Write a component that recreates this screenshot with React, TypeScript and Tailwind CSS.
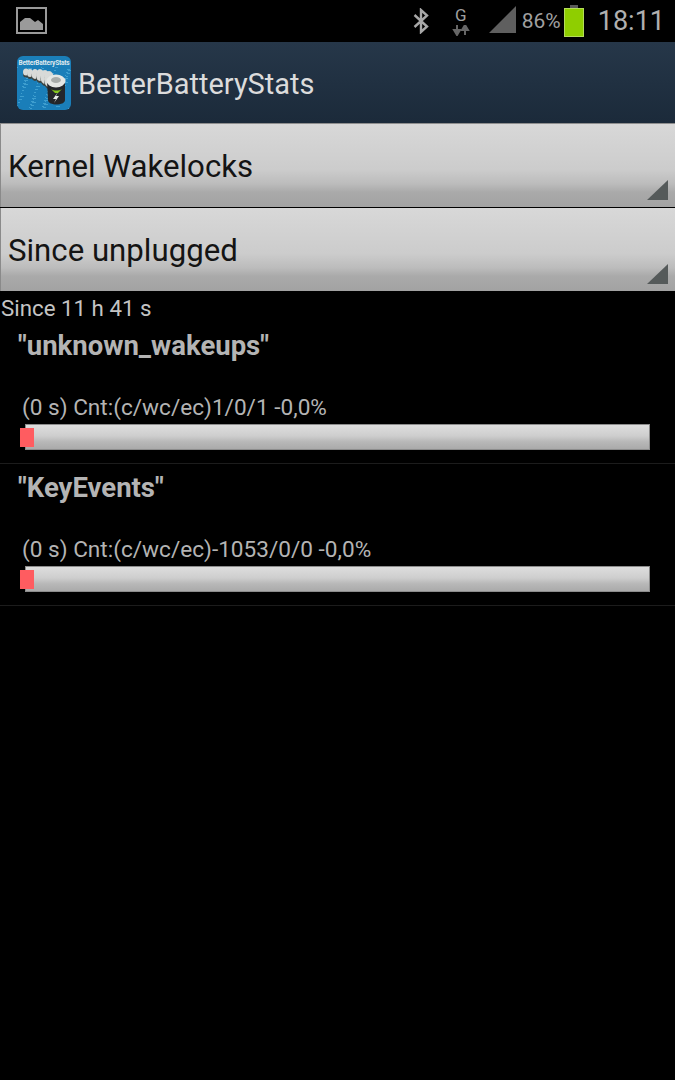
const font = { fontFamily: "Roboto, sans-serif" }

// speckle for the icon background
const specks = Array.from({ length: 90 }, (_, i) => ({
  x: (i * 17) % 52,
  y: 11 + ((i * 29) % 42),
  w: 1 + (i % 4),
}))

const chain = [
  { cx: 9, cy: 16, rx: 3, ry: 3.5 },
  { cx: 13, cy: 17, rx: 3, ry: 4 },
  { cx: 18, cy: 18, rx: 3.5, ry: 5 },
  { cx: 23, cy: 19, rx: 4, ry: 6 },
  { cx: 28, cy: 21, rx: 4.5, ry: 7 },
  { cx: 32, cy: 23, rx: 5, ry: 8 },
]

function AppIcon() {
  return (
    <div className="relative h-[54px] w-[54px] shrink-0 overflow-hidden rounded-[6px] bg-[#1b7fb9]">
      <div className="absolute left-0 right-0 top-[3px] text-center text-[6.5px] font-bold leading-[8px] tracking-[-0.2px] text-[#dfe8ee] whitespace-nowrap">
        BetterBatteryStats
      </div>
      <svg viewBox="0 0 54 54" className="absolute inset-0 h-full w-full">
        <g fill="#62bde6" opacity="0.5">
          {specks.map((s, i) => (
            <rect key={i} x={s.x} y={s.y} width={s.w} height="1" />
          ))}
        </g>
        {chain.map((c, i) => (
          <g key={i}>
            <ellipse cx={c.cx} cy={c.cy + 2} rx={c.rx} ry={c.ry} fill="#3c4442" />
            <ellipse cx={c.cx} cy={c.cy} rx={c.rx} ry={c.ry} fill="#d8dad8" />
          </g>
        ))}
        <path d="M30 25 H48 V44 C48 50 31 50 31 44 Z" fill="#24262a" />
        <ellipse cx="39" cy="25" rx="9.5" ry="6.5" fill="#e4e6e4" />
        <ellipse cx="39" cy="24" rx="5" ry="3" fill="#a8acaa" />
        <path d="M34 33 C37 35 42 35 45 33 L41 37 L38 37 Z" fill="#86c81c" />
        <path d="M41 36 L36 43 L39 43 L37 47 L42 40 L39 40 Z" fill="#e8ece8" />
      </svg>
    </div>
  )
}

function StatusBar() {
  return (
    <div className="flex h-[42px] items-center justify-between bg-black pl-4 pr-[10px]">
      <svg width="31" height="27" viewBox="0 0 31 27" className="mt-[-2px]">
        <rect x="1" y="1" width="29" height="25" fill="none" stroke="#9a9a9a" strokeWidth="2" />
        <path d="M4 23 L4 15 L9 11 L14 11 L19 15 L22 13 L27 17 L27 23 Z" fill="#9a9a9a" />
      </svg>
      <div className="flex items-center">
        <svg width="16" height="26" viewBox="0 0 16 26" className="mr-[22px]">
          <path d="M1.5 7 L14 18.5 L8 24 L8 2 L14 7.5 L1.5 19" fill="none" stroke="#a8a8a8" strokeWidth="2.4" />
        </svg>
        <div className="mr-[18px] flex w-[20px] flex-col items-center">
          <span className="text-[17px] leading-[16px] text-[#a0a0a0]">G</span>
          <svg width="18" height="11" viewBox="0 0 18 11" className="mt-[2px]">
            <path d="M5 0 V6 M2 5 L5 10 L8 5 Z" stroke="#666" strokeWidth="2" fill="#666" />
            <path d="M13 10 V4 M10 5 L13 0 L16 5 Z" stroke="#666" strokeWidth="2" fill="#666" />
          </svg>
        </div>
        <svg width="28" height="28" viewBox="0 0 28 28" className="mt-[-2px]">
          <path d="M0 27 L27 0 V27 Z" fill="#5f5f5f" />
        </svg>
        <span className="ml-[5px] text-[21px] leading-none text-[#a0a0a0]">86%</span>
        <div className="ml-[3px] flex flex-col items-center">
          <div className="h-[3px] w-[8px] bg-[#5a5a5a]" />
          <div className="h-[29px] w-[20px] border border-[#b4dc5a] bg-[#8fce00]" />
        </div>
        <span className="ml-[14px] text-[27px] leading-none text-[#b0b0b0]">18:11</span>
      </div>
    </div>
  )
}

function Spinner({ label }: { label: string }) {
  return (
    <div className="relative flex h-[83px] items-center border-l border-[#8a8a8a] bg-[linear-gradient(to_bottom,#d8d8d8_0%,#cccccc_55%,#bcbcbc_72%,#aaaaaa_82%,#a2a2a2_100%)] pl-[7px] pt-[2px]">
      <span className="text-[31.2px] leading-none text-[#141414]">{label}</span>
      <svg width="21" height="20" viewBox="0 0 21 20" className="absolute bottom-[7px] right-[7px]">
        <path d="M0 20 L21 0 V20 Z" fill="#555a5a" />
      </svg>
    </div>
  )
}

function StatRow({ name, detail }: { name: string; detail: string }) {
  return (
    <div className="h-[142px] border-b border-[#1c1c1c] pl-[18px] pt-[9px]">
      <div className="text-[27.5px] font-bold leading-[30px] text-[#b4b4b4]">{name}</div>
      <div className="mt-[35px] pl-[4px] text-[22.6px] leading-[24px] text-[#b4b4b4]">{detail}</div>
      <div className="relative ml-[7px] mt-[4px] h-[26px] w-[625px] border border-[#8c8c8c] bg-[linear-gradient(to_bottom,#dedede_0%,#cecece_45%,#b8b8b8_70%,#aaaaaa_100%)]">
        <div className="absolute left-[-6px] top-[3px] h-[19px] w-[14px] bg-[#ff5c60]" />
      </div>
    </div>
  )
}

export default function App() {
  return (
    <div className="h-[1080px] w-[675px] overflow-hidden bg-black" style={font}>
      <StatusBar />
      <div className="flex h-[81px] items-center gap-[7px] bg-[linear-gradient(to_bottom,#263749,#1b2a3a)] pl-[17px]">
        <AppIcon />
        <span className="pt-[3px] text-[29px] leading-none text-[#dcdcdc]">BetterBatteryStats</span>
      </div>
      <div className="h-[1px] bg-[#8e8e8e]" />
      <Spinner label="Kernel Wakelocks" />
      <div className="h-[1px] bg-[#000]" />
      <Spinner label="Since unplugged" />
      <div className="pl-[1px] pt-[5px] text-[22.3px] leading-[25px] text-[#c4c4c4]">Since 11 h 41 s</div>
      <div className="mt-[1px]">
        <StatRow name={'"unknown_wakeups"'} detail="(0 s) Cnt:(c/wc/ec)1/0/1 -0,0%" />
        <StatRow name={'"KeyEvents"'} detail="(0 s) Cnt:(c/wc/ec)-1053/0/0 -0,0%" />
      </div>
    </div>
  )
}
